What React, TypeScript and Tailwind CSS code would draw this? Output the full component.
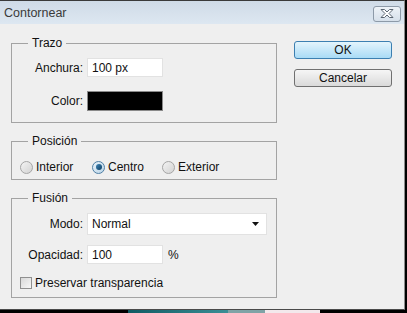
import type { ReactNode } from 'react'

function Group({ title, children, className }: { title: string; children: ReactNode; className?: string }) {
  return (
    <fieldset className={`border border-[#a3a3a3] px-0 ${className ?? ''}`}>
      <legend className="ml-[16px] px-[4px] text-[12px] leading-[14px] text-[#111]">{title}</legend>
      {children}
    </fieldset>
  )
}

function Radio({ checked, label }: { checked?: boolean; label: string }) {
  return (
    <div className="flex items-center">
      <div
        className={`flex h-[13px] w-[13px] items-center justify-center rounded-full border ${
          checked ? 'border-[#4f7fa5] bg-gradient-to-br from-[#eaf4fb] to-[#b9d3e6]' : 'border-[#a5a5a5] bg-gradient-to-br from-[#f4f4f4] to-[#d2d2d2]'
        }`}
      >
        {checked && <div className="h-[6px] w-[6px] rounded-full bg-gradient-to-br from-[#3f86b8] to-[#0d3f63]" />}
      </div>
      <span className="ml-[3px]">{label}</span>
    </div>
  )
}

export default function App() {
  return (
    <div className="relative h-[313px] w-[407px] overflow-hidden bg-black font-['Liberation_Sans',Arial,sans-serif] text-[12px] leading-[14px] text-[#111]">
      <div className="flex h-[310px] w-[405px] flex-col border-t border-r border-b border-t-[#3a3a3a] border-r-[#8c8c8c] border-b-[#4a4a4a] bg-[#efefef]">
        {/* title bar */}
        <div className="flex h-[23px] items-center justify-between bg-gradient-to-b from-[#cfdbe7] to-[#dde7f1] pl-[4px] pr-[3px]">
          <span className="text-[12.5px] text-[#3a3a3a]">Contornear</span>
          <div className="mt-[2px] flex h-[16px] w-[28px] items-center justify-center rounded-[3px] border border-[#8d9aa8] bg-gradient-to-b from-[#eef3f8] to-[#d6e0ea]">
            <svg width="16" height="11" viewBox="0 0 16 11">
              <path
                d="M2 1.5h3.5L8 4l2.5-2.5H14L10 5.5l4 4h-3.5L8 7l-2.5 2.5H2l4-4z"
                fill="#ffffff"
                stroke="#5b6672"
                strokeWidth="1"
                strokeLinejoin="round"
              />
            </svg>
          </div>
        </div>

        <div className="flex flex-1 items-start">
          {/* left column */}
          <div className="ml-[11px] mt-[12px] flex w-[266px] flex-col">
            <Group title="Trazo">
              <div className="flex flex-col gap-[14px] pt-[8px] pb-[11px]">
                <div className="flex items-center">
                  <span className="w-[71px] text-right">Anchura:</span>
                  <div className="ml-[4px] flex h-[19px] w-[76px] items-center border border-[#e2e2e2] bg-white pl-[4px]">100 px</div>
                </div>
                <div className="flex items-center">
                  <span className="w-[71px] text-right">Color:</span>
                  <div className="ml-[4px] h-[20px] w-[76px] border border-[#8a8a8a] bg-black" />
                </div>
              </div>
            </Group>

            <Group title="Posición" className="mt-[11px]">
              <div className="flex items-center pt-[12px] pb-[5px] pl-[8px]">
                <div className="w-[72px]">
                  <Radio label="Interior" />
                </div>
                <div className="w-[70px]">
                  <Radio checked label="Centro" />
                </div>
                <Radio label="Exterior" />
              </div>
            </Group>

            <Group title="Fusión" className="mt-[11px]">
              <div className="flex flex-col pt-[8px] pb-[7px]">
                <div className="flex items-center">
                  <span className="w-[71px] text-right">Modo:</span>
                  <div className="ml-[4px] flex h-[22px] w-[180px] items-center justify-between border border-[#e2e2e2] bg-white pl-[4px] pr-[7px]">
                    <span>Normal</span>
                    <svg width="7" height="4" viewBox="0 0 7 4">
                      <path d="M0 0h7L3.5 4z" fill="#111" />
                    </svg>
                  </div>
                </div>
                <div className="mt-[10px] flex items-center">
                  <span className="w-[71px] text-right">Opacidad:</span>
                  <div className="ml-[4px] flex h-[19px] w-[76px] items-center border border-[#e2e2e2] bg-white pl-[4px]">100</div>
                  <span className="ml-[5px]">%</span>
                </div>
                <div className="mt-[12px] flex items-center pl-[8px]">
                  <div className="h-[12px] w-[12px] border border-[#8f8f8f] bg-gradient-to-br from-[#d8d8d8] to-[#f7f7f7]" />
                  <span className="ml-[3px]">Preservar transparencia</span>
                </div>
              </div>
            </Group>
          </div>

          {/* buttons */}
          <div className="ml-[17px] mt-[17px] flex w-[98px] flex-col gap-[10px]">
            <button className="h-[18px] rounded-[3px] border border-[#3c7fb1] bg-gradient-to-b from-[#e3f4fc] to-[#a9dbf6] text-[12px] leading-none text-[#111]">
              OK
            </button>
            <button className="h-[18px] rounded-[3px] border border-[#707070] bg-gradient-to-b from-[#f6f6f6] to-[#dadada] text-[12px] leading-none text-[#111]">
              Cancelar
            </button>
          </div>
        </div>
      </div>

      {/* desktop peeking under the dialog */}
      <div className="flex h-[3px]">
        <div className="w-[128px] bg-black" />
        <div className="w-[100px] bg-gradient-to-r from-[#0f5b63] to-[#3a8f96]" />
        <div className="w-[37px] bg-[#7fa3a6]" />
        <div className="w-[55px] bg-[#f3e9ec]" />
        <div className="flex-1 bg-black" />
      </div>
    </div>
  )
}
